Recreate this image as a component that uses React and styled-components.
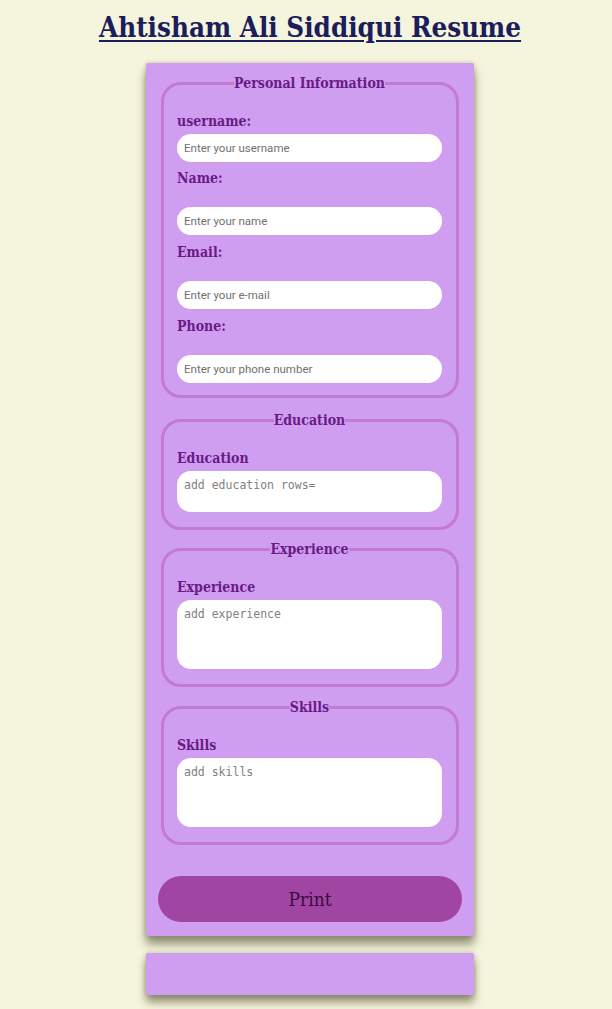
import React from 'react'
import styled, { createGlobalStyle } from 'styled-components'

const COLORS = {
  PAGE: '#f5f4dc',
  CARD: '#d09ef0',
  BORDER: '#c27ad2',
  LABEL: '#6a1a86',
  TITLE: '#1b1d5c',
  BUTTON: '#a046a2',
  BUTTON_TEXT: '#3c0a3c',
}

const SERIF = "'DejaVu Serif Condensed', 'DejaVu Serif', serif"

const GlobalStyle = createGlobalStyle`
  body {
    margin: 0;
    background: ${COLORS.PAGE};
    font-family: ${SERIF};
    overflow: hidden;
  }
`

const Page = styled.div`
  display: flex;
  flex-direction: column;
  align-items: flex-start;
  height: 1009px;
`

const Title = styled.h1`
  align-self: center;
  margin: 8px 0 17px 8px;
  font-family: ${SERIF};
  font-size: 27.5px;
  line-height: 38px;
  font-weight: bold;
  color: ${COLORS.TITLE};
  text-decoration: underline;
  text-decoration-thickness: 2px;
  text-underline-offset: 3px;
`

const Card = styled.form`
  display: flex;
  flex-direction: column;
  width: 328px;
  margin-left: 146px;
  padding: 11px 0 14px;
  box-sizing: border-box;
  background: ${COLORS.CARD};
  border-radius: 2px;
  box-shadow: 0 8px 10px rgba(60, 60, 30, 0.55), 0 0 4px rgba(60, 60, 30, 0.25);
`

const Section = styled.fieldset`
  margin: 0 15px ${props => props.$gap}px;
  padding: 20px 14px ${props => props.$bottom}px 13px;
  border: 3px solid ${COLORS.BORDER};
  border-radius: 20px;
  min-width: 0;
`

const Legend = styled.legend`
  margin: 0 auto;
  padding: 0;
  font-size: 14px;
  line-height: 18px;
  font-weight: bold;
  color: ${COLORS.LABEL};
`

const Label = styled.label`
  display: block;
  margin-top: ${props => props.$top || 0}px;
  margin-bottom: ${props => props.$bottom || 4}px;
  font-size: 14px;
  line-height: 18px;
  font-weight: bold;
  color: ${COLORS.LABEL};
`

const Input = styled.input`
  display: block;
  width: 100%;
  height: 28px;
  box-sizing: border-box;
  padding: 0 7px;
  border: none;
  border-radius: 14px;
  background: #fff;
  font-family: Roboto, sans-serif;
  font-size: 11.5px;
  outline: none;
  &::placeholder {
    color: #707070;
  }
`

const TextArea = styled.textarea`
  display: block;
  width: 100%;
  height: ${props => props.$height}px;
  box-sizing: border-box;
  padding: 7px 7px;
  border: none;
  border-radius: 14px;
  background: #fff;
  font-family: 'DejaVu Sans Mono', monospace;
  font-size: 11.5px;
  line-height: 14px;
  outline: none;
  resize: none;
  &::placeholder {
    color: #808080;
  }
`

const PrintButton = styled.button`
  margin: 0 12px;
  height: 46px;
  border: none;
  border-radius: 23px;
  background: ${COLORS.BUTTON};
  color: ${COLORS.BUTTON_TEXT};
  font-family: ${SERIF};
  font-size: 19px;
`

const Footer = styled.div`
  width: 328px;
  height: 42px;
  margin: 17px 0 0 146px;
  background: ${COLORS.CARD};
  border-radius: 2px;
  box-shadow: 0 7px 9px rgba(60, 60, 30, 0.55), 0 0 4px rgba(60, 60, 30, 0.25);
`

const personal = [
  { id: 'username', label: 'username:', placeholder: 'Enter your username', top: 0, bottom: 4 },
  { id: 'name', label: 'Name:', placeholder: 'Enter your name', top: 7, bottom: 20 },
  { id: 'email', label: 'Email:', placeholder: 'Enter your e-mail', top: 8, bottom: 20 },
  { id: 'phone', label: 'Phone:', placeholder: 'Enter your phone number', top: 8, bottom: 20 },
]

const blocks = [
  { title: 'Education', placeholder: 'add education rows=', height: 41, gap: 10 },
  { title: 'Experience', placeholder: 'add experience', height: 69, gap: 11 },
  { title: 'Skills', placeholder: 'add skills', height: 69, gap: 31 },
]

export default function App() {
  return (
    <>
      <GlobalStyle />
      <Page>
        <Title>Ahtisham Ali Siddiqui Resume</Title>
        <Card onSubmit={e => e.preventDefault()}>
          <Section $gap={13} $bottom={12}>
            <Legend>Personal Information</Legend>
            {personal.map(f => (
              <div key={f.id}>
                <Label htmlFor={f.id} $top={f.top} $bottom={f.bottom}>
                  {f.label}
                </Label>
                <Input id={f.id} placeholder={f.placeholder} />
              </div>
            ))}
          </Section>
          {blocks.map(b => (
            <Section key={b.title} $gap={b.gap} $bottom={15}>
              <Legend>{b.title}</Legend>
              <Label>{b.title}</Label>
              <TextArea placeholder={b.placeholder} $height={b.height} />
            </Section>
          ))}
          <PrintButton type="button">Print</PrintButton>
        </Card>
        <Footer />
      </Page>
    </>
  )
}
